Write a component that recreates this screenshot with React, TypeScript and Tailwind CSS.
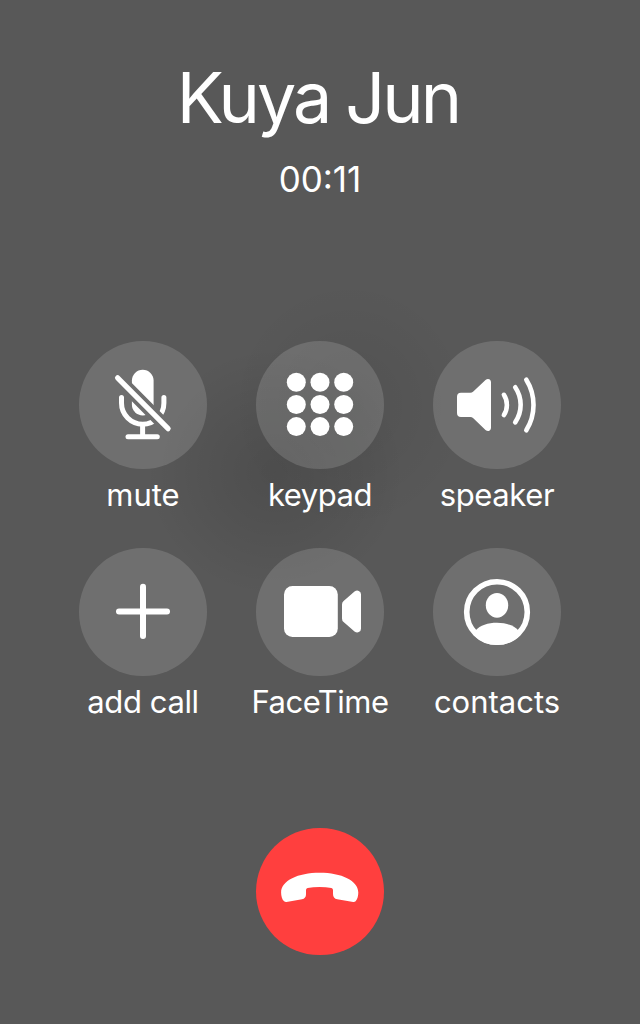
import React from "react";

interface CallAction {
  label: string;
  spacing: string;
  icon: React.ReactNode;
}

const MuteIcon = () => (
  <svg viewBox="0 0 128 128" className="h-32 w-32" fill="none" stroke="white" strokeLinecap="round">
    <mask id="mute-slash" maskUnits="userSpaceOnUse" x="0" y="0" width="128" height="128">
      <rect width="128" height="128" fill="white" stroke="none" />
      <path d="M38.6 36.8 89.1 87.7" stroke="black" strokeWidth="12.8" />
    </mask>
    <g mask="url(#mute-slash)">
      <rect x="52.9" y="28.8" width="21.7" height="45.6" rx="10.8" fill="white" stroke="none" />
      <path d="M42.5 56.5V62a21.2 21.2 0 0 0 42.4 0V56.5" strokeWidth="5" />
    </g>
    <path d="M63.6 83V95" strokeWidth="5" strokeLinecap="butt" />
    <path d="M49 95.8H78.3" strokeWidth="5" />
    <path d="M38.6 36.8 89.1 87.7" strokeWidth="5.2" />
  </svg>
);

const KeypadIcon = () => (
  <svg viewBox="0 0 128 128" className="h-32 w-32" fill="white">
    {[41.3, 63.5, 85.6].map((y) =>
      [40.3, 64, 87.7].map((x) => <circle key={`${x}-${y}`} cx={x} cy={y} r="9.5" />)
    )}
  </svg>
);

const SpeakerIcon = () => (
  <svg viewBox="0 0 128 128" className="h-32 w-32" fill="none" stroke="white" strokeLinecap="round">
    <path
      d="M28 51.7H37.2Q39 51.7 40.3 50.4L52.5 38.9Q54.5 37.4 56.4 38.3 58 39.2 58 41V87Q58 88.9 56.4 89.7 54.5 90.6 52.5 89L40.3 77.3Q39 75.9 37.2 75.9H28Q24 75.9 24 71.9V55.7Q24 51.7 28 51.7Z"
      fill="white"
      stroke="none"
    />
    <path d="M70.9 53.8A18.5 18.5 0 0 1 70.9 74" strokeWidth="4.6" />
    <path d="M82.2 46.3A31 31 0 0 1 82.2 81.4" strokeWidth="4.6" />
    <path d="M93.3 38.7A48 48 0 0 1 93.3 89.3" strokeWidth="4.6" />
  </svg>
);

const PlusIcon = () => (
  <svg viewBox="0 0 128 128" className="h-32 w-32" stroke="white" strokeLinecap="round" strokeWidth="6">
    <path d="M40 63.5H88" />
    <path d="M64 38.8V88" />
  </svg>
);

const VideoIcon = () => (
  <svg viewBox="0 0 128 128" className="h-32 w-32" fill="white">
    <rect x="28" y="38" width="53.8" height="51" rx="8.5" />
    <path d="M86 56.5Q86 54.3 87.6 52.9L98.5 43.6Q100.7 41.9 102.8 42.9 105 43.9 105 46.3V80.7Q105 83.1 102.8 84.1 100.7 85 98.5 83.4L87.6 74Q86 72.6 86 70.4Z" />
  </svg>
);

const ContactIcon = () => (
  <svg viewBox="0 0 128 128" className="h-32 w-32" fill="white">
    <clipPath id="contact-disc">
      <circle cx="64" cy="64" r="33" />
    </clipPath>
    <circle cx="64" cy="64" r="30.3" fill="none" stroke="white" strokeWidth="5.6" />
    <ellipse cx="64" cy="57.3" rx="11.2" ry="12.4" />
    <path d="M42.5 82.5C47 77.4 55 74.8 64 74.8S81 77.4 85.5 82.5V98H42.5Z" clipPath="url(#contact-disc)" />
  </svg>
);

const HangUpIcon = () => (
  <svg viewBox="0 0 128 128" className="h-32 w-32" fill="white">
    <path d="M25.1 64.5C25.1 52.5 42 44.7 63.7 44.7S102.3 52.5 102.3 64.5C102.3 68 101.4 71.5 99.6 73.2Q98.6 74.1 97.2 73.9L81.3 71.3Q77 70.5 77 66V62Q77 60.3 75.4 60 70 59.1 63.5 59.1T51.6 60Q50 60.3 50 62V66.3Q50 70.5 46 71.3L30.5 73.9Q29.2 74.1 28.1 73.3C26 71.5 25.1 68 25.1 64.5Z" />
  </svg>
);

const actions: CallAction[] = [
  { label: "mute", spacing: "tracking-normal", icon: <MuteIcon /> },
  { label: "keypad", spacing: "tracking-[-0.5px]", icon: <KeypadIcon /> },
  { label: "speaker", spacing: "tracking-[-0.4px]", icon: <SpeakerIcon /> },
  { label: "add call", spacing: "tracking-[-0.4px]", icon: <PlusIcon /> },
  { label: "FaceTime", spacing: "tracking-[-0.5px]", icon: <VideoIcon /> },
  { label: "contacts", spacing: "tracking-normal", icon: <ContactIcon /> },
];

const ActionButton = ({ label, spacing, icon }: CallAction) => (
  <button className="flex w-32 flex-col items-center">
    <span className="h-32 w-32 rounded-full bg-white/14">{icon}</span>
    <span className={`mt-1.5 text-[31px] leading-10 whitespace-nowrap ${spacing}`}>{label}</span>
  </button>
);

export default function App() {
  return (
    <main className="flex h-[1024px] w-[640px] flex-col items-center overflow-hidden bg-[#585858] bg-[radial-gradient(ellipse_130px_125px_at_275px_472px,rgba(0,0,0,0.12),rgba(0,0,0,0.07)_45%,transparent),radial-gradient(ellipse_120px_125px_at_350px_405px,rgba(0,0,0,0.07),transparent)] font-['Inter',sans-serif] text-white">
      {/* Caller */}
      <header className="flex flex-col items-center pt-[58px]">
        <h1 className="pr-1 text-[70px] leading-[80px] tracking-[-2.9px] [word-spacing:-1px] whitespace-nowrap">Kuya Jun</h1>
        <p className="mt-[19px] text-[35px] leading-[44px] tracking-normal">00:11</p>
      </header>

      {/* Call controls */}
      <section className="mt-[140px] grid grid-cols-3 gap-x-[49px] gap-y-[33px]">
        {actions.map((action) => (
          <ActionButton key={action.label} {...action} />
        ))}
      </section>

      <button aria-label="End call" className="mt-[106px] h-[127px] w-32 overflow-hidden rounded-full bg-[#ff3f3e]">
        <HangUpIcon />
      </button>
    </main>
  );
}
